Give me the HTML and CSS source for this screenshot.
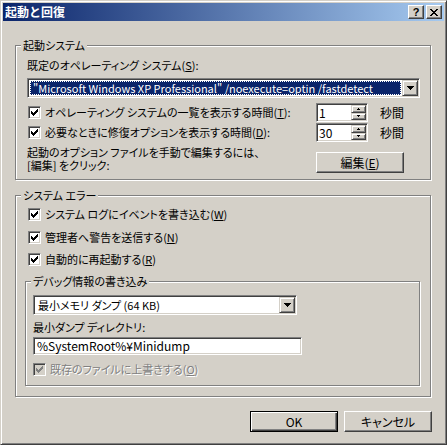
FILE: index.html
```html
<!DOCTYPE html>
<html lang="ja">
<head>
<meta charset="utf-8">
<title>起動と回復</title>
<link rel="stylesheet" href="styles.css">
</head>
<body>
<div class="window">
  <div class="titlebar">
    <span class="title">起動と回復</span>
    <div class="tbtns">
      <span class="tbtn help">?</span>
      <span class="tbtn close"><svg width="8" height="7" viewBox="0 0 8 7"><path d="M0 0h2v1H0zM6 0h2v1H6zM1 1h2v1H1zM5 1h2v1H5zM2 2h4v1H2zM3 3h2v1H3zM2 4h4v1H2zM1 5h2v1H1zM5 5h2v1H5zM0 6h2v1H0zM6 6h2v1H6z" fill="#000"/></svg></span>
    </div>
  </div>
  <div class="client">
    <div class="group g1">
      <div class="legend">起動システム</div>
      <div class="label l-os">既定のオペレーティング システム(<u>S</u>):</div>
      <div class="combo combo-os">
        <div class="combo-field"><span class="sel">"Microsoft Windows XP Professional" /noexecute=optin /fastdetect</span></div>
        <span class="drop"><svg width="7" height="4" viewBox="0 0 7 4"><path d="M0 0h7v1H0zM1 1h5v1H1zM2 2h3v1H2zM3 3h1v1H3z" fill="#000"/></svg></span>
      </div>
      <div class="srow r1">
        <div class="lbl"><span class="cb"><svg class="ck" width="7" height="7" viewBox="0 0 7 7"><path d="M0 2h1v3H0zM1 3h1v3H1zM2 4h1v3H2zM3 3h1v3H3zM4 2h1v3H4zM5 1h1v3H5zM6 0h1v3H6z"/></svg></span><span class="ctext">オペレーティング システムの一覧を表示する時間(<u>T</u>):</span></div>
        <div class="spin"><span class="spin-val">1</span><span class="spin-btns"><span class="sbtn"><svg width="3" height="2" viewBox="0 0 3 2"><path d="M1 0h1v1H1zM0 1h3v1H0z"/></svg></span><span class="sbtn"><svg width="3" height="2" viewBox="0 0 3 2"><path d="M0 0h3v1H0zM1 1h1v1H1z"/></svg></span></span></div>
        <span class="unit">秒間</span>
      </div>
      <div class="srow r2">
        <div class="lbl"><span class="cb"><svg class="ck" width="7" height="7" viewBox="0 0 7 7"><path d="M0 2h1v3H0zM1 3h1v3H1zM2 4h1v3H2zM3 3h1v3H3zM4 2h1v3H4zM5 1h1v3H5zM6 0h1v3H6z"/></svg></span><span class="ctext">必要なときに修復オプションを表示する時間(<u>D</u>):</span></div>
        <div class="spin"><span class="spin-val">30</span><span class="spin-btns"><span class="sbtn"><svg width="3" height="2" viewBox="0 0 3 2"><path d="M1 0h1v1H1zM0 1h3v1H0z"/></svg></span><span class="sbtn"><svg width="3" height="2" viewBox="0 0 3 2"><path d="M0 0h3v1H0zM1 1h1v1H1z"/></svg></span></span></div>
        <span class="unit">秒間</span>
      </div>
      <div class="erow">
        <div class="etext"><div>起動のオプション ファイルを手動で編集するには、</div><div>[編集] をクリック:</div></div>
        <span class="btn edit">編集(<u>E</u>)</span>
      </div>
    </div>

    <div class="group g2">
      <div class="legend">システム エラー</div>
      <div class="crow c1"><span class="cb"><svg class="ck" width="7" height="7" viewBox="0 0 7 7"><path d="M0 2h1v3H0zM1 3h1v3H1zM2 4h1v3H2zM3 3h1v3H3zM4 2h1v3H4zM5 1h1v3H5zM6 0h1v3H6z"/></svg></span><span class="ctext">システム ログにイベントを書き込む(<u>W</u>)</span></div>
      <div class="crow c2"><span class="cb"><svg class="ck" width="7" height="7" viewBox="0 0 7 7"><path d="M0 2h1v3H0zM1 3h1v3H1zM2 4h1v3H2zM3 3h1v3H3zM4 2h1v3H4zM5 1h1v3H5zM6 0h1v3H6z"/></svg></span><span class="ctext">管理者へ警告を送信する(<u>N</u>)</span></div>
      <div class="crow c3"><span class="cb"><svg class="ck" width="7" height="7" viewBox="0 0 7 7"><path d="M0 2h1v3H0zM1 3h1v3H1zM2 4h1v3H2zM3 3h1v3H3zM4 2h1v3H4zM5 1h1v3H5zM6 0h1v3H6z"/></svg></span><span class="ctext">自動的に再起動する(<u>R</u>)</span></div>

      <div class="group g3">
        <div class="legend">デバッグ情報の書き込み</div>
        <div class="combo combo-dump">
          <div class="combo-field"><span class="val">最小メモリ ダンプ (64 KB)</span></div>
          <span class="drop"><svg width="7" height="4" viewBox="0 0 7 4"><path d="M0 0h7v1H0zM1 1h5v1H1zM2 2h3v1H2zM3 3h1v1H3z" fill="#000"/></svg></span>
        </div>
        <div class="label l-dir">最小ダンプ ディレクトリ:</div>
        <div class="input">%SystemRoot%¥Minidump</div>
        <div class="crow c4 disabled"><span class="cb"><svg class="ck" width="7" height="7" viewBox="0 0 7 7"><path d="M0 2h1v3H0zM1 3h1v3H1zM2 4h1v3H2zM3 3h1v3H3zM4 2h1v3H4zM5 1h1v3H5zM6 0h1v3H6z"/></svg></span><span class="ctext">既存のファイルに上書きする(<u>O</u>)</span></div>
      </div>
    </div>

    <div class="buttons">
      <span class="btn default">OK</span>
      <span class="btn">キャンセル</span>
    </div>
  </div>
</div>
</body>
</html>
```

FILE: styles.css
```css
* { box-sizing: border-box; }
html, body { margin: 0; padding: 0; }
body {
  font-family: "Noto Sans CJK JP", sans-serif;
  font-size: 11px;
  line-height: 13px;
  color: #000;
  background: #d4d0c8;
  font-feature-settings: "palt";
}
u { text-underline-offset: 1px; }

.window {
  width: 447px;
  height: 445px;
  border: 1px solid;
  border-color: #d4d0c8 #404040 #404040 #d4d0c8;
  box-shadow: inset 1px 1px #fff, inset -1px -1px #808080;
  padding: 2px;
  background: #d4d0c8;
  display: flex;
  flex-direction: column;
}

.titlebar {
  height: 18px;
  flex: none;
  display: flex;
  align-items: center;
  padding: 0 2px 0 2px;
  background: linear-gradient(to right, #0a246a, #a6caf0);
}
.title {
  flex: 1;
  color: #fff;
  font-weight: bold;
  font-size: 12px;
  line-height: 14px;
  font-feature-settings: normal;
}
.tbtns { display: flex; gap: 2px; }
.tbtn {
  width: 16px;
  height: 14px;
  background: #d4d0c8;
  border: 1px solid;
  border-color: #fff #404040 #404040 #fff;
  box-shadow: inset -1px -1px #808080;
  display: flex;
  align-items: center;
  justify-content: center;
}
.tbtn svg { display: block; }
.help {
  font-family: "Liberation Sans", sans-serif;
  font-weight: bold;
  font-size: 11px;
  line-height: 11px;
}

.client {
  flex: 1;
  display: flex;
  flex-direction: column;
  padding: 0 12px 0 12px;
}

.group {
  border: 1px solid #808080;
  box-shadow: inset 1px 1px #fff, 1px 1px #fff;
  display: flex;
  flex-direction: column;
}
.legend {
  align-self: flex-start;
  background: #d4d0c8;
  padding: 0 2px;
  margin: -7px 0 0 5px;
  line-height: 13px;
}

.g1 {
  margin: 24px 1px 0 0;
  padding: 0 10px 6px 11px;
}
.g1 > .legend { margin-left: -6px; }
.l-os { margin-top: 7px; }

.combo {
  display: flex;
  height: 20px;
  border: 1px solid;
  border-color: #808080 #fff #fff #808080;
  box-shadow: inset 1px 1px #404040, inset -1px -1px #d4d0c8;
  background: #fff;
  padding: 1px;
}
.combo-field {
  flex: 1;
  display: flex;
  padding: 1px;
  min-width: 0;
}
.sel {
  flex: 1;
  background: #0a246a;
  color: #fff;
  border: 1px dotted #fff;
  padding: 0 0 0 2px;
  line-height: 12px;
  white-space: nowrap;
  overflow: hidden;
}
.val {
  padding-left: 2px;
  line-height: 14px;
  white-space: nowrap;
}
.drop {
  width: 16px;
  flex: none;
  background: #d4d0c8;
  border: 1px solid;
  border-color: #d4d0c8 #404040 #404040 #d4d0c8;
  box-shadow: inset 1px 1px #fff, inset -1px -1px #808080;
  display: flex;
  align-items: center;
  justify-content: center;
}
.drop svg { display: block; }
.combo-os { margin-top: 6px; }

.srow {
  display: flex;
  align-items: center;
  height: 19px;
}
.r1 { margin-top: 5px; }
.r2 { margin-top: 1px; }
.lbl {
  width: 289px;
  display: flex;
  align-items: center;
  padding-left: 1px;
}
.cb {
  width: 13px;
  height: 13px;
  flex: none;
  border: 1px solid;
  border-color: #808080 #fff #fff #808080;
  box-shadow: inset 1px 1px #404040, inset -1px -1px #d4d0c8;
  background: #fff;
  display: flex;
  align-items: center;
  justify-content: center;
}
.ck { display: block; fill: #000; }
.ctext { margin-left: 4px; white-space: nowrap; }

.spin {
  width: 52px;
  height: 19px;
  display: flex;
  border: 1px solid;
  border-color: #808080 #fff #fff #808080;
  box-shadow: inset 1px 1px #404040, inset -1px -1px #d4d0c8;
  background: #fff;
  padding: 1px;
}
.spin-val {
  flex: 1;
  padding-left: 1px;
  line-height: 15px;
  font-size: 12px;
}
.spin-btns {
  width: 15px;
  display: flex;
  flex-direction: column;
}
.sbtn {
  flex: 1;
  background: #d4d0c8;
  border: 1px solid;
  border-color: #d4d0c8 #404040 #404040 #d4d0c8;
  box-shadow: inset 1px 1px #fff, inset -1px -1px #808080;
  display: flex;
  align-items: center;
  justify-content: center;
}
.sbtn svg { display: block; fill: #000; }
.unit { margin-left: 12px; font-size: 12px; }

.erow {
  display: flex;
  align-items: flex-start;
  margin-top: 4px;
}
.etext { width: 289px; line-height: 13px; }

.btn {
  width: 88px;
  height: 21px;
  background: #d4d0c8;
  border: 1px solid;
  border-color: #fff #404040 #404040 #fff;
  box-shadow: inset -1px -1px #808080;
  display: flex;
  align-items: center;
  justify-content: center;
  line-height: 13px;
  font-size: 12px;
}
.edit { margin-top: 6px; }
.btn.default {
  border-color: #000;
  box-shadow: inset 1px 1px #fff, inset -1px -1px #404040, inset -2px -2px #808080;
}

.g2 {
  margin: 15px 1px 0 0;
  padding: 0 10px 10px 0;
}
.crow {
  display: flex;
  align-items: center;
  margin-left: 12px;
  height: 13px;
}
.c1 { margin-top: 6px; }
.c2 { margin-top: 10px; }
.c3 { margin-top: 9px; }

.g3 {
  margin: 15px 0 0 9px;
  padding: 0 0 9px 7px;
}
.g3 > .legend { margin-left: -2px; }
.combo-dump { margin-top: 7px; width: 264px; }
.l-dir { margin-top: 6px; }
.input {
  margin-top: 3px;
  width: 269px;
  height: 18px;
  border: 1px solid;
  border-color: #808080 #fff #fff #808080;
  box-shadow: inset 1px 1px #404040, inset -1px -1px #d4d0c8;
  background: #fff;
  padding: 1px 3px;
  line-height: 14px;
  white-space: nowrap;
  font-size: 12px;
}
.c4 { margin-top: 8px; margin-left: 0; }
.disabled .cb { background: #d4d0c8; }
.disabled .ck { fill: #808080; }
.crow.disabled .ctext { color: #808080; text-shadow: 1px 1px #fff; }

.buttons {
  display: flex;
  justify-content: flex-end;
  gap: 6px;
  margin-top: 14px;
}
```
